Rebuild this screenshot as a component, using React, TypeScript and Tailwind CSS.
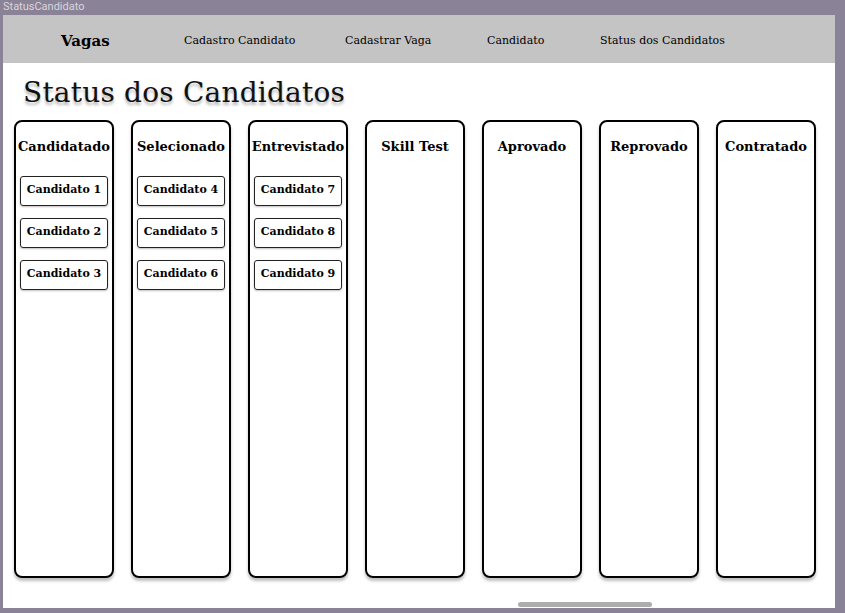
const columns = [
  { title: "Candidatado", items: ["Candidato 1", "Candidato 2", "Candidato 3"] },
  { title: "Selecionado", items: ["Candidato 4", "Candidato 5", "Candidato 6"] },
  { title: "Entrevistado", items: ["Candidato 7", "Candidato 8", "Candidato 9"] },
  { title: "Skill Test", items: [] },
  { title: "Aprovado", items: [] },
  { title: "Reprovado", items: [] },
  { title: "Contratado", items: [] },
];

const links = [
  { label: "Vagas", w: "w-[123px]", bold: true },
  { label: "Cadastro Candidato", w: "w-[161px]" },
  { label: "Cadastrar Vaga", w: "w-[142px]" },
  { label: "Candidato", w: "w-[113px]" },
  { label: "Status dos Candidatos", w: "w-[180px]" },
];

const slab = { fontFamily: '"Roboto Slab", "DejaVu Serif", serif' };

export default function App() {
  return (
    <div className="w-[845px] h-[613px] bg-[#8a8296] flex flex-col overflow-hidden">
      <div className="h-[15px] pl-[3px] text-[11px] leading-[14px] text-[#d9d5de]" style={{ fontFamily: "Roboto, sans-serif" }}>
        StatusCandidato
      </div>
      <div className="flex-1 pl-[3px] pr-[10px] pb-[5px] flex">
        <div className="flex-1 bg-white flex flex-col" style={slab}>
          <nav className="h-[48px] bg-[#c4c4c4] flex items-center pt-[5px] pl-[58px] text-black">
            {links.map((l) => (
              <div
                key={l.label}
                className={`${l.w} shrink-0 ${l.bold ? "text-[15px] font-bold" : "text-[11px]"}`}
              >
                {l.label}
              </div>
            ))}
          </nav>

          <h1
            className="pl-[20px] pt-[11px] text-[28px] leading-[37px] text-[#111] tracking-[0.2px]"
            style={{ textShadow: "0 3px 3px rgba(0,0,0,0.3)" }}
          >
            Status dos Candidatos
          </h1>

          <div className="flex gap-[17px] pl-[11px] mt-[9px]">
            {columns.map((c) => (
              <div
                key={c.title}
                className="w-[100px] h-[458px] shrink-0 border-2 border-black rounded-[8px] flex flex-col items-center shadow-[0_3px_3px_rgba(0,0,0,0.25)]"
              >
                <div className="pt-[15px] text-[13px] font-bold text-black whitespace-nowrap">{c.title}</div>
                <div className="flex flex-col gap-[12px] mt-[19px]">
                  {c.items.map((it) => (
                    <div
                      key={it}
                      className="w-[88px] h-[30px] border border-[#222] rounded-[3px] flex items-center justify-center text-[11px] font-bold text-black shadow-[0_1px_2px_rgba(0,0,0,0.25)] whitespace-nowrap"
                    >
                      {it}
                    </div>
                  ))}
                </div>
              </div>
            ))}
          </div>

          <div className="flex-1 flex items-end pl-[515px] pb-[1px]">
            <div className="w-[134px] h-[5px] rounded-full bg-[#adadad]" />
          </div>
        </div>
      </div>
    </div>
  );
}
